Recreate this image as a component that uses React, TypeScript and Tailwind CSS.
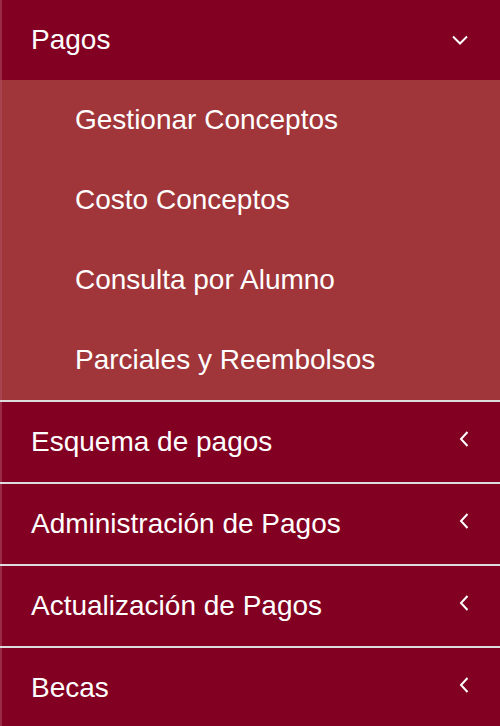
import React from "react";

const Down = () => (
  <svg width="18" height="10" viewBox="0 0 18 10" className="block">
    <path d="M2 1.5 L9 8.5 L16 1.5" stroke="white" strokeWidth="2" fill="none" />
  </svg>
);
const Left = () => (
  <svg width="12" height="18" viewBox="0 0 12 18" className="block">
    <path d="M9.5 2 L3 9 L9.5 16" stroke="white" strokeWidth="2" fill="none" />
  </svg>
);

const subs = ["Gestionar Conceptos", "Costo Conceptos", "Consulta por Alumno", "Parciales y Reembolsos"];
const items = ["Esquema de pagos", "Administración de Pagos", "Actualización de Pagos", "Becas"];

export default function App() {
  return (
    <div
      className="w-[500px] h-[726px] overflow-hidden bg-[#820022] text-white text-[28px]"
      style={{ fontFamily: '"Liberation Sans", Arial, sans-serif' }}
    >
      <div className="flex h-[80px] items-center justify-between border-l-2 border-[#9a2a45] pl-[29px] pr-[31px]">
        <span>Pagos</span>
        <Down />
      </div>
      <div className="bg-[#a0353a] border-l-2 border-[#a84450]">
        {subs.map((s) => (
          <div key={s} className="flex h-[80px] items-center pl-[73px]">
            {s}
          </div>
        ))}
      </div>
      {items.map((s) => (
        <div key={s} className="border-t-2 border-[#dcdcdc]">
          <div className="flex h-[80px] items-center justify-between border-l-2 border-[#9a2a45] pl-[29px] pr-[30px]">
            <span>{s}</span>
            <div className="-mt-[6px]">
              <Left />
            </div>
          </div>
        </div>
      ))}
    </div>
  );
}
